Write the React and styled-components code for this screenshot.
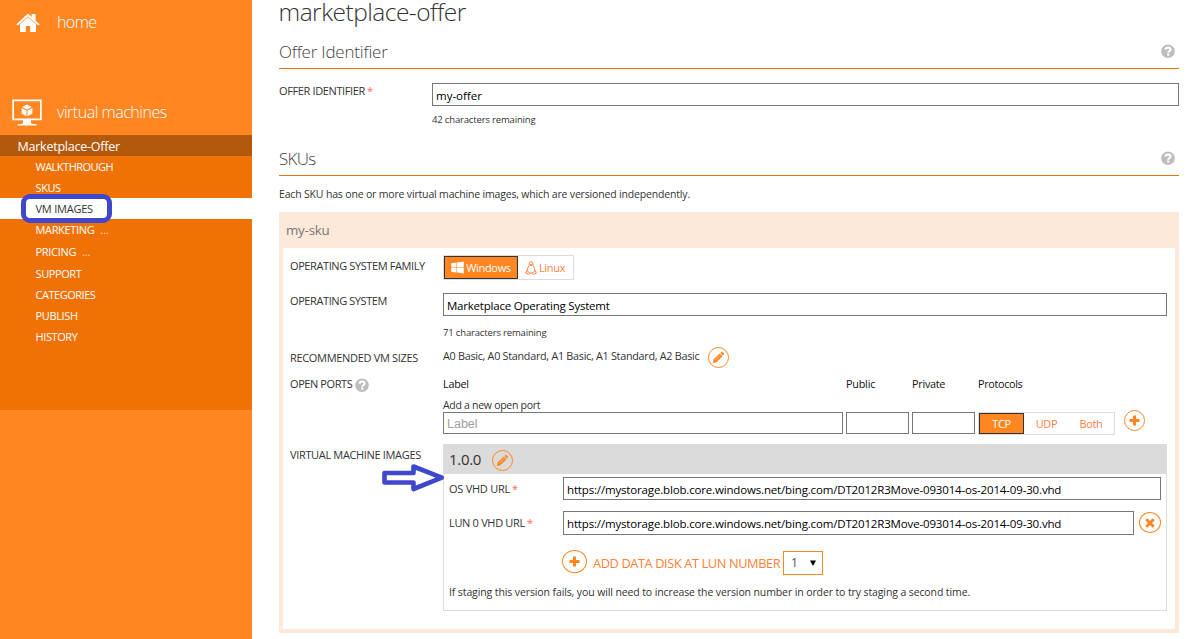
import React from 'react';
import styled, { createGlobalStyle } from 'styled-components';

const orange = '#ff8621';
const blue = '#3f48cc';

const Global = createGlobalStyle`
  * { box-sizing: border-box; }
  body { margin: 0; background: #fff; color: #333; font-family: "Open Sans", "Noto Sans", sans-serif; font-size: 11px; overflow: hidden; }
  input, select, button { font-family: inherit; margin: 0; }
`;

const Page = styled.div`display: flex; width: 1198px; height: 639px; overflow: hidden;`;

/* Sidebar */
const Sidebar = styled.nav`width: 252px; flex: none; background: ${orange}; color: #fff; height: 639px;`;
const Area = styled.div`
  display: flex; align-items: center; height: ${p => p.$h}px; padding-top: ${p => p.$top}px; padding-left: ${p => p.$left}px;
  font-size: 16px; font-weight: 300; letter-spacing: ${p => p.$ls}px;
`;
const AreaIcon = styled.span`display: flex; width: ${p => p.$w}px;`;
const AreaName = styled.span`padding-bottom: 1px;`;
const OfferName = styled.div`height: 21px; line-height: 23px; padding-left: 17.5px; background: #b3590d; font-size: 12.5px; letter-spacing: -0.24px;`;
const Menu = styled.div`height: 254px; background: #f07105;`;
const Item = styled.div`
  position: relative; height: ${p => p.$h || 21}px; line-height: 22px; padding-left: 35.5px; white-space: pre;
  font-size: 11px; letter-spacing: ${p => p.$ls}px;
  background: ${p => (p.$on ? '#fff' : 'transparent')}; color: ${p => (p.$on ? '#333' : '#fff')};
`;
const Dots = styled.span`margin-left: 6px; opacity: 0.75; font-size: 10px; letter-spacing: 0.2px;`;
const Marker = styled.span`position: absolute; left: 21px; top: -4px; width: 91px; height: 29px; border: 5px solid ${blue}; border-radius: 9px;`;

/* Content */
const Main = styled.main`width: 900px; margin-left: 27px; display: flex; flex-direction: column;`;
const Title = styled.h1`margin: 0 0 0 -0.5px; height: 23px; line-height: 23px; font-size: 24.5px; font-weight: 300; letter-spacing: -0.5px; white-space: nowrap;`;
const SectionHead = styled.div`
  display: flex; align-items: center; justify-content: space-between; height: 35px; margin-top: ${p => p.$mt}px; padding-right: 4px;
  border-bottom: 1px solid #f07105; font-size: 17px; font-weight: 300; letter-spacing: ${p => p.$ls}px; color: #444;
`;
const Row = styled.div`display: grid; grid-template-columns: 153px 1fr; align-items: start; height: ${p => p.$h}px; padding-top: ${p => p.$pt || 0}px;`;
const Label = styled.label`
  display: flex; line-height: 16px; margin-top: ${p => p.$mt || 0}px; font-size: 11px; letter-spacing: ${p => p.$ls}px; white-space: pre;
`;
const Star = styled.span`color: #ff6a55; margin-left: 2px;`;
const Input = styled.input`
  display: block; width: ${p => p.$w || '100%'}; height: ${p => p.$h || 23}px; border: 1px solid #777; border-radius: 0; padding: ${p => (p.$h ? 0 : 2)}px 3px 0; outline: 0;
  font-size: 11.5px; letter-spacing: ${p => p.$ls || 0}px; color: #000; background: #fff;
  &::placeholder { color: #a0a0a0; font-family: "Liberation Sans", Arial, sans-serif; font-size: 12.5px; opacity: 1; }
`;
const Hint = styled.div`margin-top: ${p => p.$mt}px; line-height: 14px; font-size: 9.5px; letter-spacing: -0.16px;`;
const Intro = styled.p`margin: 10px 0; line-height: 16px; font-size: 10.5px; letter-spacing: -0.17px; white-space: nowrap;`;

const Sku = styled.section`height: 421px; background: #fce9da; padding: 0 4px 4px;`;
const SkuName = styled.div`height: 36px; line-height: 36px; padding-left: 3px; font-size: 13.3px; letter-spacing: -0.2px; color: #777;`;
const SkuBody = styled.div`height: 381px; background: #fff; padding: 7px 8px 0 7px;`;

const Toggle = styled.div`display: flex; width: ${p => p.$w}px; height: ${p => p.$h}px; border: 1px solid #dcdcdc; background: #fff;`;
const Option = styled.button`
  display: flex; align-items: center; justify-content: center; gap: 2px; width: ${p => p.$w}px; height: 100%; padding: 0;
  border: ${p => (p.$on ? '1px solid #333' : '0')}; background: ${p => (p.$on ? orange : 'transparent')};
  color: ${p => (p.$on ? '#fff' : '#ff7f45')}; font-size: 11px; letter-spacing: -0.33px;
`;
const Sizes = styled.div`display: flex; gap: 9px; line-height: 16px; font-size: 10.8px; letter-spacing: -0.28px; white-space: nowrap;`;
const SizesText = styled.span`padding-top: 1px; width: 256px;`;
const Circle = styled.button`
  display: flex; align-items: center; justify-content: center; flex: none; padding: 0; margin-top: ${p => p.$mt || 0}px;
  width: ${p => p.$w || 21}px; height: ${p => p.$h || 21}px; border: 1px solid ${orange}; border-radius: 50%; background: transparent; color: ${orange};
`;
const Ports = styled.div`display: grid; grid-template-columns: 400px 63px 63px 137px 21px; column-gap: 3px; align-items: start;`;
const PortHead = styled.div`line-height: 16px; font-size: 10.8px; letter-spacing: ${p => p.$ls}px; color: #111;`;
const PortPrompt = styled.div`grid-column: 1 / -1; margin-top: 5px; height: 15px; line-height: 16px; font-size: 10.5px; letter-spacing: -0.28px;`;
const PortAdd = styled.div`margin: -2px 0 0 6px; display: flex;`;
const HelpSlot = styled.span`display: flex; padding-top: 2px;`;

const Version = styled.div`height: 167px; border: 1px solid #dbdbdb; border-top: 0;`;
const VersionHead = styled.div`
  display: flex; align-items: center; height: 30px; margin: 0 -1px; padding: 3px 0 0 6px; background: #dbdbdb; font-size: 15px; letter-spacing: -0.3px;
`;
const VersionNumber = styled.span`width: 43px; margin-top: -3px;`;
const VhdRow = styled.div`display: grid; grid-template-columns: 114px 1fr; align-items: start; height: ${p => p.$h}px; margin: 0 5px;`;
const VhdInput = styled.div`padding-top: 3px;`;
const VhdField = styled.div`display: flex; gap: 5px; align-items: flex-start;`;
const AddDisk = styled.div`display: flex; align-items: flex-start; height: 26px; margin-left: 118px; color: #ff7f35; font-size: 12.8px; letter-spacing: -0.4px; white-space: nowrap;`;
const AddText = styled.span`width: 190px; line-height: 26px; margin-left: 6px;`;
const Select = styled.div`
  display: flex; align-items: center; justify-content: space-between; width: 40px; height: 24px; padding: 0 6px 1px 7px; margin-top: 1px;
  border: 1px solid ${orange}; color: #456; font-size: 12px;
`;
const StagingNote = styled.p`margin: 8px 0 0 5px; line-height: 16px; font-size: 10.5px; letter-spacing: -0.11px; white-space: nowrap;`;
const VmCell = styled.div`position: relative;`;
const ArrowMark = styled.svg`position: absolute; left: 92px; top: 20px;`;

const HomeIcon = () => (
  <svg width="24" height="20" viewBox="0 0 24 20" fill="#fff">
    <path d="M12 0.6 15.6 4V1H19.6V7.7L23.6 11.3 22.2 12.6 12 3.6 1.8 12.6 0.4 11.3Z" />
    <path d="M12 4.2 20 11.2V19H14.2V13H9.8V19H4V11.2Z" />
  </svg>
);
const VmIcon = () => (
  <svg width="30" height="28" viewBox="0 0 30 28" fill="#fff">
    <path fillRule="evenodd" d="M0.3 0.6H29.7V21.2H0.3ZM2 2.3V19.5H28V2.3Z" />
    <path d="M11 21H19V24.2Q21 25.2 24.5 25.3V26.6H5.5V25.3Q9 25.2 11 24.2Z" />
    <path d="M15 5.6 20 8 15 10.5 10 8ZM9.6 9 14.5 11.4V17.2L9.6 14.6ZM20.4 9V14.6L15.5 17.2V11.4Z" />
  </svg>
);
const Help = () => (
  <svg width="14" height="14" viewBox="0 0 14 14">
    <circle cx="7" cy="7.2" r="6.8" fill="#bdbdbd" />
    <path d="M4.4 5.6Q4.5 3.5 7.1 3.5 9.6 3.6 9.6 5.5 9.6 6.6 8.3 7.2 7.3 7.6 7.3 8.7" fill="none" stroke="#fff" strokeWidth="2" />
    <rect x="6.1" y="9.6" width="2.3" height="2" fill="#fff" />
  </svg>
);
const Pencil = () => (
  <svg width="13" height="13" viewBox="0 0 13 13" fill="currentColor">
    <path d="M9.1 1.2Q9.9 0.5 10.7 1.2L11.8 2.3Q12.5 3.1 11.8 3.8L11 4.6 8.3 2Z" />
    <path d="M7.7 2.4 10.6 5.2 4.5 11.3 0.8 12.2 1.5 8.6Z" />
    <path d="M3.4 9.2 8.2 4.4" stroke="#fff" strokeWidth="0.4" />
  </svg>
);
const Plus = () => (
  <svg width="11" height="11" viewBox="0 0 11 11" fill="currentColor"><path d="M4 0.5H7V4H10.5V7H7V10.5H4V7H0.5V4H4Z" /></svg>
);
const Cross = () => (
  <svg width="10" height="10" viewBox="0 0 10 10" stroke="currentColor" strokeWidth="2.9"><path d="M1.3 1.3 8.7 8.7M8.7 1.3 1.3 8.7" /></svg>
);
const WindowsLogo = () => (
  <svg width="13" height="13" viewBox="0 0 13 13" fill="#fff"><path d="M0.3 2.2 5.5 1.5V6.2H0.3ZM6.1 1.4 12.8 0.4V6.2H6.1ZM0.3 6.8H5.5V11.5L0.3 10.8ZM6.1 6.8H12.8V12.6L6.1 11.6Z" /></svg>
);
const Tux = () => (
  <svg width="12" height="14" viewBox="0 0 12 14" fill="none" stroke="#ff7f45" strokeWidth="1">
    <path d="M4.1 4.6V2.8Q4.3 0.7 6 0.7T7.9 2.8V4.6Q10 7.3 9.9 9.7M4.1 4.6Q2 7.3 2.1 9.7M4.6 12H7.4" />
    <path d="M2 9.4 4.7 12.2 3.6 13.3 0.7 12.1ZM10 9.4 7.3 12.2 8.4 13.3 11.3 12.1Z" />
    <path d="M5 3.8H7L6 4.9Z" fill="#ff7f45" />
  </svg>
);
const Caret = () => (
  <svg width="6" height="6" viewBox="0 0 6 6"><path d="M0 0.5H6L3 6Z" fill="#000" /></svg>
);

const url = 'https://mystorage.blob.core.windows.net/bing.com/DT2012R3Move-093014-os-2014-09-30.vhd';
const items = [
  { t: 'WALKTHROUGH', ls: -0.5 }, { t: 'SKUS', ls: -0.4 }, { t: 'VM IMAGES', ls: -0.22, on: true },
  { t: 'MARKETING', ls: -0.34, h: 22, dots: true }, { t: 'PRICING', ls: -0.3, h: 22, dots: true },
  { t: 'SUPPORT', ls: -0.4 }, { t: 'CATEGORIES', ls: -0.47 }, { t: 'PUBLISH', ls: -0.35 }, { t: 'HISTORY', ls: -0.4 },
];

export default function App() {
  return (
    <Page>
      <Global />
      <Sidebar>
        <Area $h={45} $top={0} $left={15.5} $ls={-0.6}><AreaIcon $w={41.5}><HomeIcon /></AreaIcon><AreaName>home</AreaName></Area>
        <Area $h={90} $top={45} $left={12} $ls={-0.47}><AreaIcon $w={45}><VmIcon /></AreaIcon><AreaName>virtual machines</AreaName></Area>
        <OfferName>Marketplace-Offer</OfferName>
        <Menu>
          {items.map(i => (
            <Item key={i.t} $ls={i.ls} $h={i.h} $on={i.on}>{i.t}{i.dots && <Dots>...</Dots>}{i.on && <Marker />}</Item>
          ))}
        </Menu>
      </Sidebar>
      <Main>
        <Title>marketplace-offer</Title>
        <SectionHead $mt={11} $ls={-0.2}>Offer Identifier<Help /></SectionHead>
        <Row $h={57} $pt={14}>
          <Label $ls={-0.37}>OFFER IDENTIFIER<Star>*</Star></Label>
          <div><Input defaultValue="my-offer" /><Hint $mt={7}>42 characters remaining</Hint></div>
        </Row>
        <SectionHead $mt={15} $ls={-0.7}>SKUs<Help /></SectionHead>
        <Intro>Each SKU has one or more virtual machine images, which are versioned independently.</Intro>
        <Sku>
          <SkuName>my-sku</SkuName>
          <SkuBody>
            <Row $h={38}>
              <Label $mt={3} $ls={-0.4}>OPERATING SYSTEM FAMILY</Label>
              <Toggle $w={131} $h={25}>
                <Option $on $w={74}><WindowsLogo />Windows</Option>
                <Option $w={54}><Tux />Linux</Option>
              </Toggle>
            </Row>
            <Row $h={54}>
              <Label $ls={-0.41}>OPERATING SYSTEM</Label>
              <div><Input defaultValue="Marketplace Operating Systemt" $ls={-0.22} /><Hint $mt={10}>71 characters remaining</Hint></div>
            </Row>
            <Row $h={29}>
              <Label $mt={3} $ls={-0.32}>RECOMMENDED VM SIZES</Label>
              <Sizes><SizesText>A0 Basic, A0 Standard, A1 Basic, A1 Standard, A2 Basic</SizesText><Circle><Pencil /></Circle></Sizes>
            </Row>
            <Row $h={68}>
              <Label $ls={-0.42}>OPEN PORTS <HelpSlot><Help /></HelpSlot></Label>
              <Ports>
                <PortHead $ls={-0.25}>Label</PortHead><PortHead $ls={-0.2}>Public</PortHead><PortHead $ls={-0.25}>Private</PortHead><PortHead $ls={-0.32}>Protocols</PortHead><span />
                <PortPrompt>Add a new open port</PortPrompt>
                <Input $h={22} placeholder="Label" /><Input $h={22} /><Input $h={22} />
                <Toggle $w={137} $h={23}>
                  <Option $on $w={45}>TCP</Option><Option $w={45}>UDP</Option><Option $w={44}>Both</Option>
                </Toggle>
                <PortAdd><Circle><Plus /></Circle></PortAdd>
              </Ports>
            </Row>
            <Row $h={167}>
              <VmCell>
                <Label $mt={3} $ls={-0.34}>VIRTUAL MACHINE IMAGES</Label>
                <ArrowMark width="63" height="28" viewBox="0 0 63 28">
                  <path d="M2.5 9H31.5V2.5L59.8 13.7 31.5 25V18.5H2.5Z" fill="#fff" stroke={blue} strokeWidth="4.6" strokeLinejoin="round" />
                </ArrowMark>
              </VmCell>
              <Version>
                <VersionHead><VersionNumber>1.0.0</VersionNumber><Circle><Pencil /></Circle></VersionHead>
                <VhdRow $h={37}>
                  <Label $mt={7} $ls={-0.25}>OS VHD URL<Star>*</Star></Label>
                  <VhdInput><Input defaultValue={url} $ls={-0.16} /></VhdInput>
                </VhdRow>
                <VhdRow $h={39}>
                  <Label $mt={4} $ls={-0.32}>LUN 0 VHD URL<Star>*</Star></Label>
                  <VhdField><Input defaultValue={url} $w="571px" $h={24} $ls={-0.16} /><Circle $w={22} $mt={1}><Cross /></Circle></VhdField>
                </VhdRow>
                <AddDisk>
                  <Circle $w={25} $h={23}><Plus /></Circle>
                  <AddText>ADD DATA DISK AT LUN NUMBER</AddText>
                  <Select>1<Caret /></Select>
                </AddDisk>
                <StagingNote>If staging this version fails, you will need to increase the version number in order to try staging a second time.</StagingNote>
              </Version>
            </Row>
          </SkuBody>
        </Sku>
      </Main>
    </Page>
  );
}
